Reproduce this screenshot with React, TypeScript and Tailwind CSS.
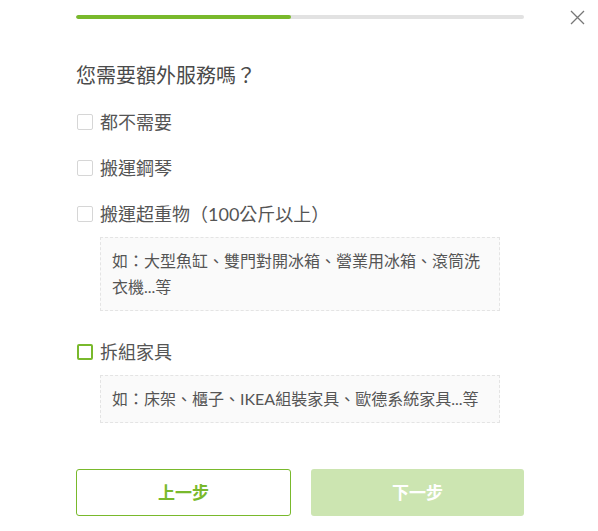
import { useState } from 'react';

const FONT = "font-['Lato','Noto_Sans_CJK_TC',sans-serif]";

interface Option {
  id: string;
  label: string;
  note?: string;
}

const options: Option[] = [
  { id: 'none', label: '都不需要' },
  { id: 'piano', label: '搬運鋼琴' },
  {
    id: 'heavy',
    label: '搬運超重物（100公斤以上）',
    note: '如：大型魚缸、雙門對開冰箱、營業用冰箱、滾筒洗衣機...等',
  },
  {
    id: 'furniture',
    label: '拆組家具',
    note: '如：床架、櫃子、IKEA組裝家具、歐德系統家具...等',
  },
];

export default function App() {
  const [checked, setChecked] = useState<Record<string, boolean>>({});
  const focused = 'furniture';

  return (
    <div className={`relative w-[598px] h-[531px] bg-white text-[#4a4a4a] ${FONT}`}>
      <button className="absolute right-[13px] top-[10px] w-[15px] h-[15px] text-[#777]">
        <svg viewBox="0 0 15 15" width="15" height="15" fill="none" stroke="currentColor" strokeWidth="1.3">
          <path d="M1 1 L14 14 M14 1 L1 14" />
        </svg>
      </button>

      <div className="px-[76px] pt-[15px] w-[600px]">
        <div className="w-[448px] h-[4px] rounded-full bg-[#e2e2e2] overflow-hidden">
          <div className="h-full w-[215px] bg-[#79b92c] rounded-full" />
        </div>

        <h2 className="mt-[42px] text-[20px] leading-[28px] text-[#4a4a4a]">您需要額外服務嗎？</h2>

        <div className="mt-[20px] flex flex-col">
          {options.map((o, i) => (
            <div key={o.id} className={i === 0 ? '' : i === 3 ? 'mt-[28px]' : 'mt-[20px]'}>
              <label className="flex items-center h-[26px] cursor-pointer">
                <input
                  type="checkbox"
                  className="sr-only"
                  checked={!!checked[o.id]}
                  onChange={() => setChecked(p => ({ ...p, [o.id]: !p[o.id] }))}
                />
                <span
                  className={`ml-[1px] w-[16px] h-[16px] rounded-[2px] bg-white ${
                    o.id === focused ? 'border-2 border-[#79b92c]' : 'border border-[#d6d6d6]'
                  }`}
                />
                <span className="ml-[7px] text-[18px] text-[#555]">{o.label}</span>
              </label>
              {o.note && (
                <div className="ml-[24px] mt-[10px] w-[400px] border border-dashed border-[#e4e4e4] bg-[#fafafa] px-[11px] py-[10px] text-[16px] leading-[26px] text-[#555]">
                  {o.note}
                </div>
              )}
            </div>
          ))}
        </div>

        <div className="mt-[46px] flex gap-[20px] w-[448px]">
          <button className="flex-1 h-[47px] rounded-[3px] border border-[#79b92c] bg-white text-[#79b92c] text-[17px] font-bold">
            上一步
          </button>
          <button className="flex-1 h-[47px] rounded-[3px] bg-[#cce5b1] text-white text-[17px] font-bold">
            下一步
          </button>
        </div>
      </div>
    </div>
  );
}
